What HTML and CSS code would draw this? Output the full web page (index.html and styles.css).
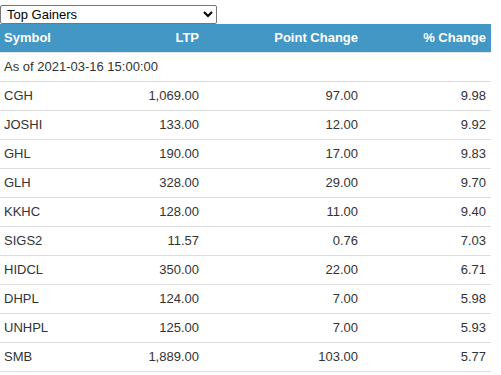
FILE: index.html
```html
<!DOCTYPE html>
<html>
<head>
<meta charset="utf-8">
<link rel="stylesheet" href="styles.css">
</head>
<body>
<div class="wrap">
  <select class="picker">
    <option>Top Gainers</option>
    <option>Top Losers</option>
    <option>Top Turnover</option>
  </select>
  <table class="market">
    <colgroup>
      <col class="c1"><col class="c2"><col class="c3"><col class="c4">
    </colgroup>
    <thead>
      <tr><th class="left">Symbol</th><th>LTP</th><th>Point Change</th><th>% Change</th></tr>
    </thead>
    <tbody>
      <tr><td class="left asof" colspan="4">As of 2021-03-16 15:00:00</td></tr>
      <tr><td class="left">CGH</td><td>1,069.00</td><td>97.00</td><td>9.98</td></tr>
      <tr><td class="left">JOSHI</td><td>133.00</td><td>12.00</td><td>9.92</td></tr>
      <tr><td class="left">GHL</td><td>190.00</td><td>17.00</td><td>9.83</td></tr>
      <tr><td class="left">GLH</td><td>328.00</td><td>29.00</td><td>9.70</td></tr>
      <tr><td class="left">KKHC</td><td>128.00</td><td>11.00</td><td>9.40</td></tr>
      <tr><td class="left">SIGS2</td><td>11.57</td><td>0.76</td><td>7.03</td></tr>
      <tr><td class="left">HIDCL</td><td>350.00</td><td>22.00</td><td>6.71</td></tr>
      <tr><td class="left">DHPL</td><td>124.00</td><td>7.00</td><td>5.98</td></tr>
      <tr><td class="left">UNHPL</td><td>125.00</td><td>7.00</td><td>5.93</td></tr>
      <tr><td class="left">SMB</td><td>1,889.00</td><td>103.00</td><td>5.77</td></tr>
    </tbody>
  </table>
</div>
</body>
</html>
```
FILE: styles.css
```css
html, body {
  margin: 0;
  padding: 0;
  background: #fff;
}
.wrap {
  padding-top: 5px;
  font-family: "Liberation Sans", Arial, sans-serif;
  font-size: 13px;
  color: #333;
}
.picker {
  display: block;
  width: 217px;
  height: 19px;
  margin: 0;
  font-family: "Liberation Sans", Arial, sans-serif;
  font-size: 13px;
  color: #000;
  background: #fff;
  border: 1px solid #767676;
  border-radius: 2px;
  padding: 0 0 0 2px;
}
.market {
  width: 491px;
  border-collapse: collapse;
  table-layout: fixed;
}
.c1 { width: 100px; }
.c2 { width: 104px; }
.c3 { width: 159px; }
.c4 { width: 128px; }
.market th {
  background: #4297c5;
  color: #fff;
  font-weight: bold;
  font-size: 13px;
  height: 27px;
  padding: 0 5px 1px 4px;
  text-align: right;
  border-bottom: 1px solid #e6e6e6;
}
.market td {
  height: 27px;
  padding: 0 5px 1px 4px;
  text-align: right;
  border-bottom: 1px solid #dddddd;
}
.market .left { text-align: left; }
```
